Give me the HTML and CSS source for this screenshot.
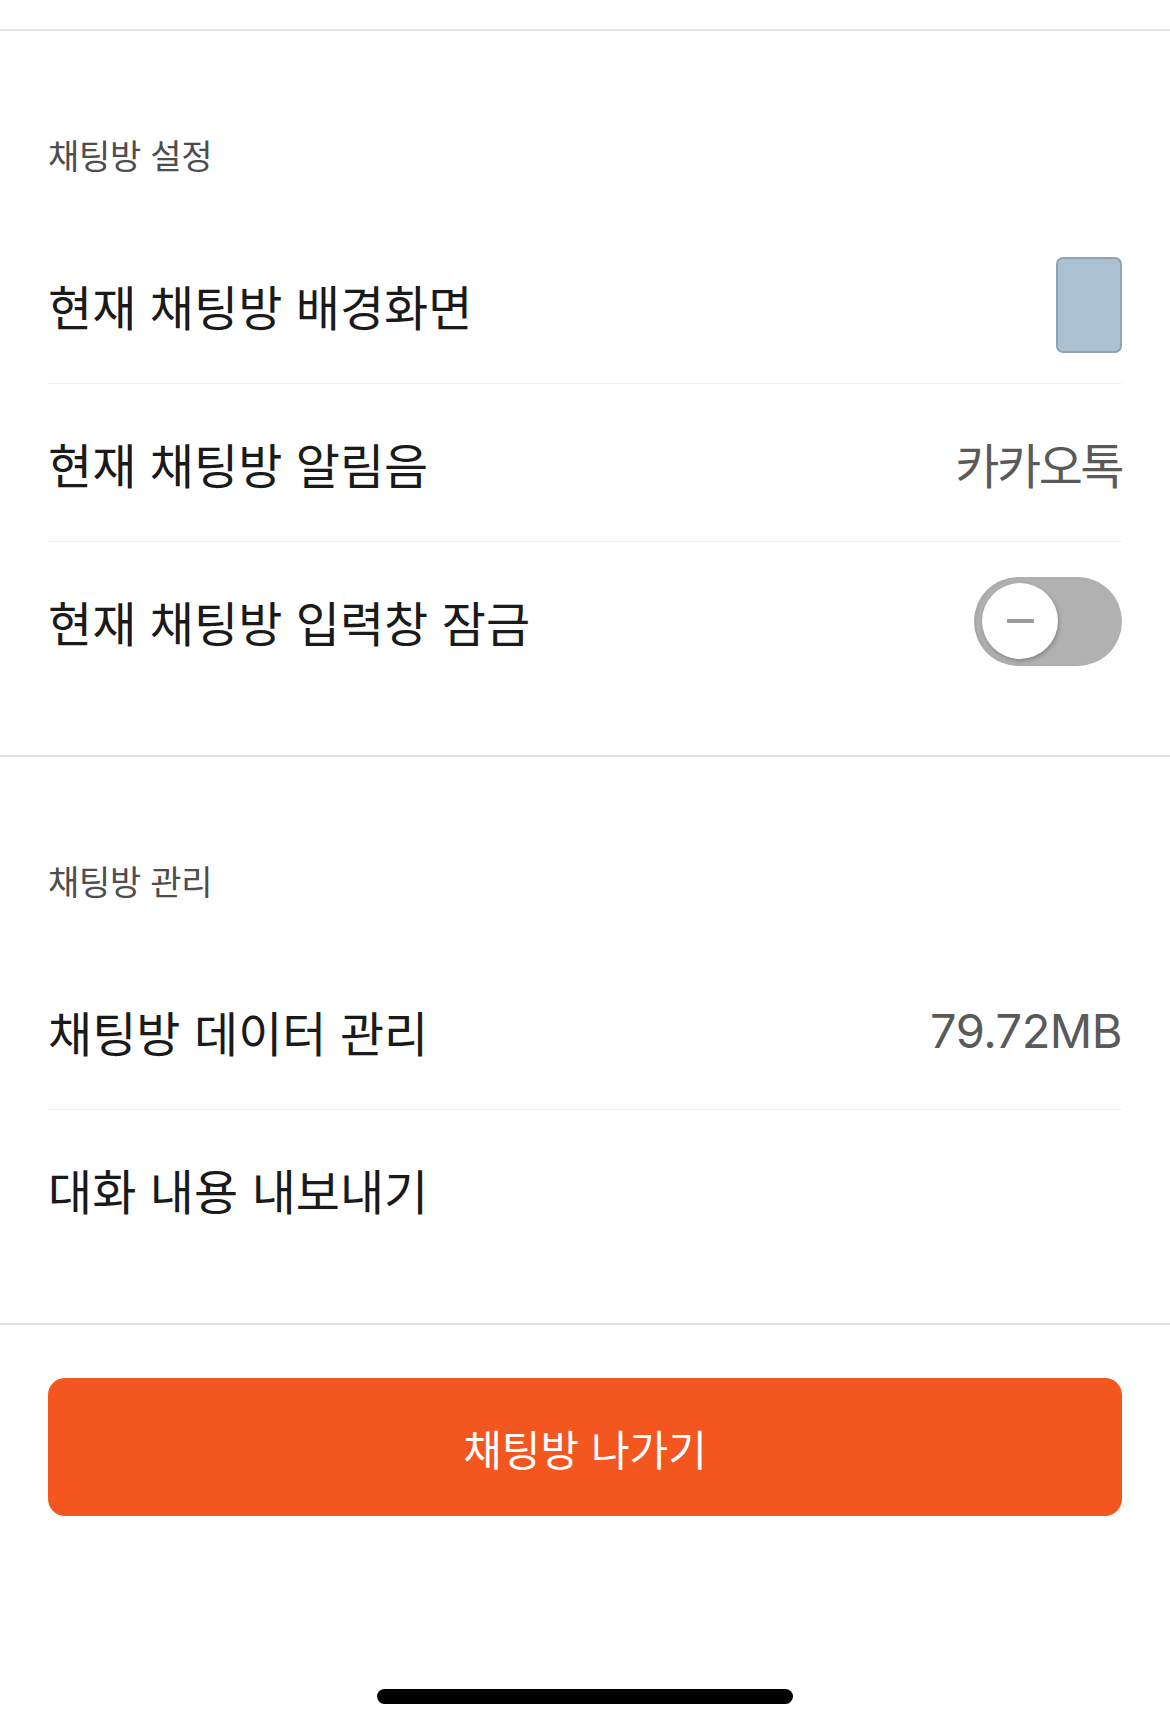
FILE: index.html
```html
<!DOCTYPE html>
<html lang="ko">
<head>
<meta charset="utf-8">
<title>채팅방 설정</title>
<link rel="stylesheet" href="styles.css">
</head>
<body>
<div class="page">
  <div class="topbar"></div>

  <section class="section">
    <div class="section-header">채팅방 설정</div>
    <div class="row">
      <span class="label">현재 채팅방 배경화면</span>
      <span class="thumb"></span>
    </div>
    <div class="row">
      <span class="label">현재 채팅방 알림음</span>
      <span class="value">카카오톡</span>
    </div>
    <div class="row">
      <span class="label">현재 채팅방 입력창 잠금</span>
      <span class="toggle"><span class="knob"><span class="minus"></span></span></span>
    </div>
  </section>

  <section class="section">
    <div class="section-header">채팅방 관리</div>
    <div class="row">
      <span class="label">채팅방 데이터 관리</span>
      <span class="value num">79.72MB</span>
    </div>
    <div class="row">
      <span class="label">대화 내용 내보내기</span>
    </div>
  </section>

  <div class="actions">
    <button class="leave-btn">채팅방 나가기</button>
  </div>

  <div class="home-area">
    <div class="home-indicator"></div>
  </div>
</div>
</body>
</html>
```

FILE: styles.css
```css
* {
  box-sizing: border-box;
}

html, body {
  margin: 0;
  padding: 0;
  background: #ffffff;
}

body {
  font-family: Inter, "Noto Sans CJK KR", sans-serif;
  color: #1a1a1a;
}

.page {
  width: 1170px;
  height: 1728px;
  display: flex;
  flex-direction: column;
  overflow: hidden;
}

.topbar {
  height: 31px;
  border-bottom: 2px solid #e4e4e4;
  flex: none;
}

.section {
  padding: 51px 48px 55px 48px;
  border-bottom: 2px solid #e4e4e4;
  flex: none;
}

.section-header {
  height: 144px;
  display: flex;
  align-items: center;
  font-size: 34px;
  letter-spacing: -0.3px;
  color: #4d4d4d;
}

.row {
  height: 158px;
  display: flex;
  align-items: center;
  justify-content: space-between;
  border-bottom: 1px solid #f1f1f1;
}

.row:last-child {
  border-bottom: none;
}

.label {
  font-size: 48px;
  letter-spacing: 0;
  color: #1a1a1a;
}

.value {
  font-size: 48px;
  letter-spacing: -2.5px;
  color: #5a5a5a;
}

.value.num {
  font-size: 47px;
  letter-spacing: -0.5px;
}

.thumb {
  width: 66px;
  height: 96px;
  background: #abc0d1;
  border: 2px solid #8fa3b3;
  border-radius: 7px;
}

.toggle {
  width: 148px;
  height: 89px;
  border-radius: 45px;
  background: #b1b1b1;
  display: flex;
  align-items: center;
  padding-left: 8px;
  box-shadow: inset 2px 0 3px rgba(0, 0, 0, 0.08);
}

.knob {
  width: 76px;
  height: 76px;
  border-radius: 50%;
  background: #ffffff;
  box-shadow: 1px 2px 4px rgba(0, 0, 0, 0.25);
  display: flex;
  align-items: center;
  justify-content: center;
}

.minus {
  width: 27px;
  height: 4px;
  background: #9c9c9c;
}

.actions {
  padding: 53px 48px 0 48px;
  flex: none;
}

.leave-btn {
  width: 100%;
  height: 138px;
  border: none;
  border-radius: 17px;
  background: #f4561f;
  color: #ffffff;
  font-family: Inter, "Noto Sans CJK KR", sans-serif;
  font-size: 42px;
  letter-spacing: 0;
  padding: 0;
}

.home-area {
  flex: 1;
  display: flex;
  align-items: flex-end;
  justify-content: center;
  padding-bottom: 24px;
}

.home-indicator {
  width: 416px;
  height: 15px;
  border-radius: 8px;
  background: #000000;
}
```
